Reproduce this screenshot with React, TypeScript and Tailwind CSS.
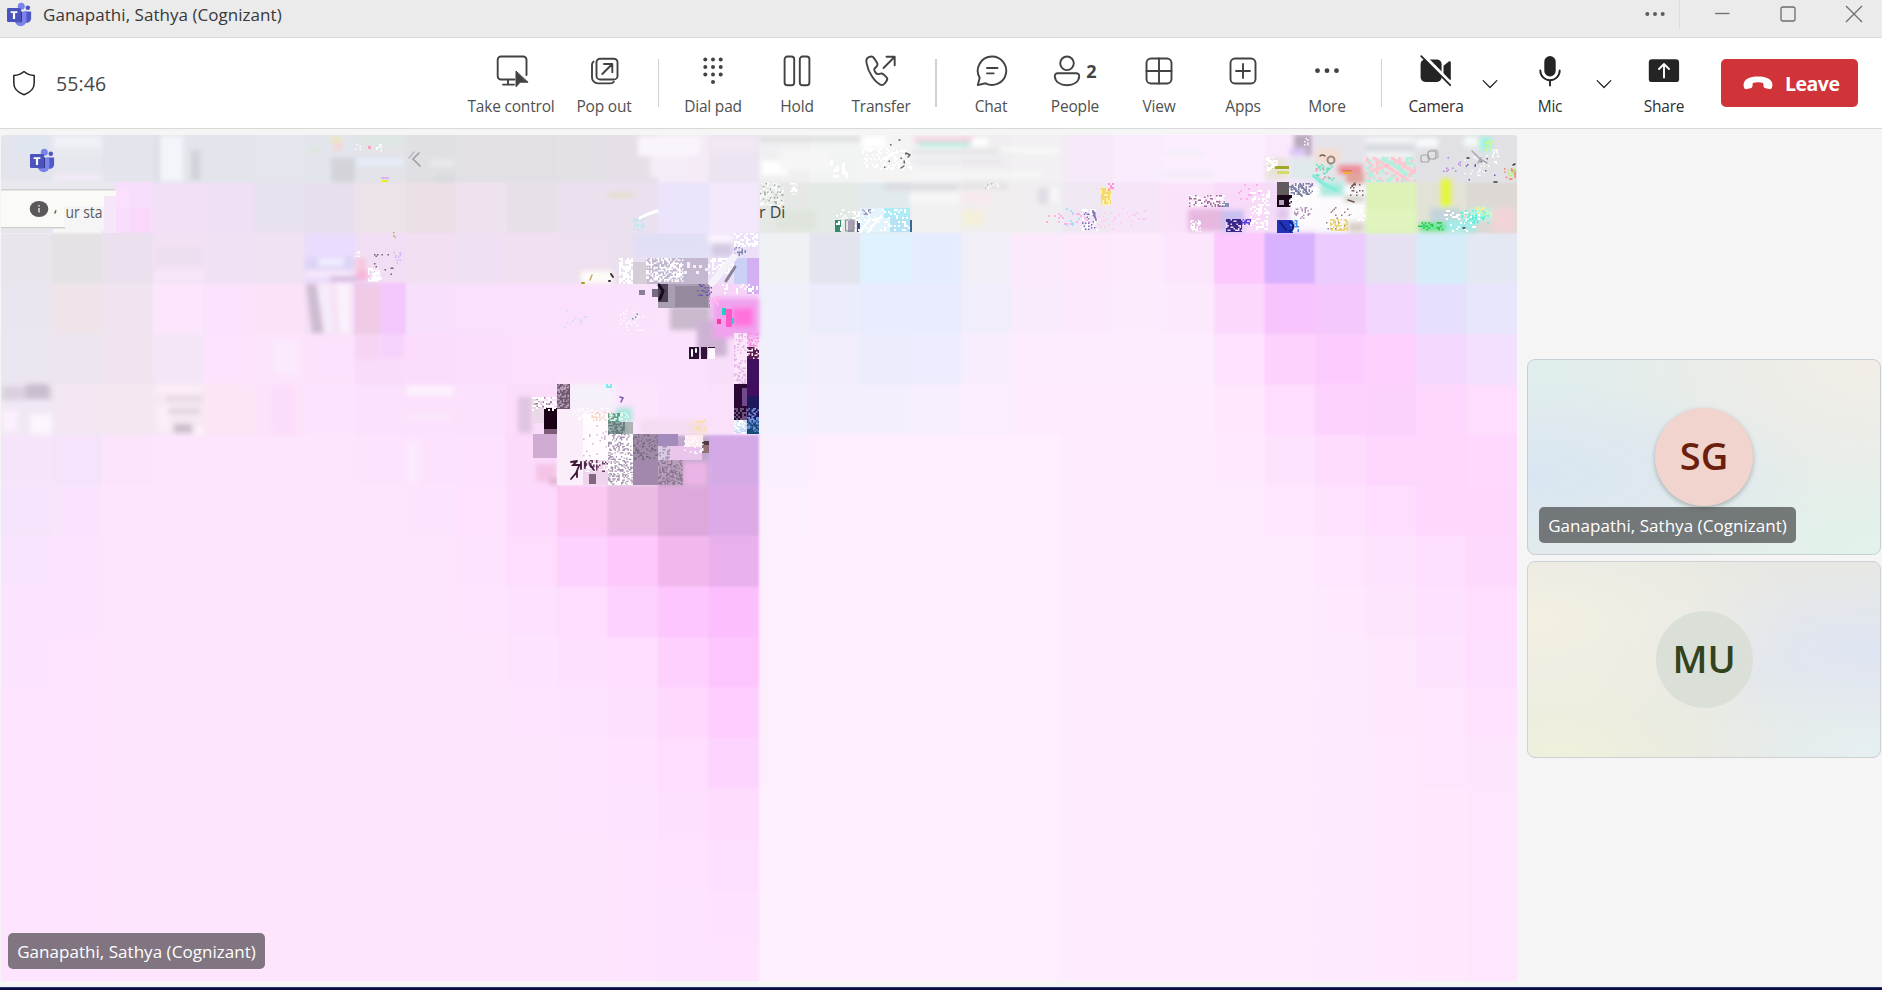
import React from "react";

const FONT = "font-['Segoe_UI','Open_Sans','Noto_Sans',sans-serif]";

/* ---------- shared video frame data ---------- */

const CELLS: string[] = [
  "e4e4ec e6e6ee e4e4ec e4e4ec e3e4ec e4e5ed e3e5ed e3e3e8 e0e0e4 e2e0e4 e2e0e5 e3e0e6 e6dfe8 f4ebf6 ede4f2 f0f0f2 f2f4f4 f4f4f4 f2f2f4 f0eef0 f2f0f2 f6eaf9 f9ecfd fceefe fceefe fae8fd e4e4ea e2e4e8 e1e1e5 e2e2e6",
  "f8f7f4 f8f8f4 f5dcfb f1e0f6 f0e0f5 e8e2ee e7e0ec ece2e9 eae0e6 efe2ef e8e0e8 ebe0ee ebe0ee ebe4fa f3e8fc e6e8e6 e4eae6 e2eaee f0f0f0 f0eeee f0eef0 efe8f3 f6e4f9 fbe2fb fadaf9 f4dcf9 f2f0f8 dcf2b6 e3e2d6 ddd8d4",
  "e8e6ec e4e2e4 ebe0ee f1e1f3 f1e1f5 f0e1f3 ecdcfa f2def4 f2dff2 f0e0f3 f0e0f0 eee0ee ebe0ee e5e2f5 ece0f8 f0f1f4 e2e4ee e0f2fe e6ecff f2eef8 fbe9fc fde8fc fdeafd fce6fe fcc8fd d8b2ff ecccfe e6e0f2 d6ecf8 e4e8f2",
  "eae6f0 efe4ea efe4f0 fbe6fd fce2fd fbe2f8 f5e0f5 f2c8f8 f8e0fd fae0fd fae0fd fae0fd fae2fd fbe2fd f6d4f8 eff0fa ebecfc e8ecfe e8ecfe f2edfb f9ebfc fce9fd fcebfd fde9fe fcd8fe f8c4fd f4c8fd f2d6fd e6e0fe e8e6fd",
  "ece6f0 ede6f0 efe4f0 f5e6f7 fde3fd fce4fd fce2fc f9dcfa fbdcfd fbddfd fcdffd fce1fd fce1fd fbe1fd f9def9 f0f0fb f2edfb ebedfd ecedfe f8edfc fdecfe fdecfe fdecfe fdecfe fee2fe fdd2fd fdccfe fdd0fe f5d8fd f2e0fe",
  "f0e8f4 f3e6f3 f3e6f0 f6e8f3 fce5f5 fde2fb fde4fe fce1fd fce1fd fce1fd fbdcfb fce8fc fbe4fc fbe1fd fbe0fb f3f1fc f5effd f5effd f8effe fbeefe feecfe feecfe feecfe feecfe fee8fe feddfe fdd3fe fbd2fc fed7fe feddfe",
  "f6e5fa f5e3fc fce4fd fde5fe fde5fe fde5fe fde5fe fde4fe fde2fe fde1fe fcdafc fce8fc e8dcee c0a8cc d4aae6 faf0fd feeefe feeefe feeefe feeefe feeefe feecfe feecfe feecfe fee9fe fee3fe fedcfe fdd7fe fdd6fe fed8fe",
  "f5e4fb fae4fd fde5fe fde5fe fde5fe fde5fe fde5fe fde5fe fde4fe fee2fe fdd9fd fcc8f4 eabbe4 dda8da dcaae6 fceffe feeefe feeefe feeefe feeefe feeefe feecfe feecfe feecfe feebfe fee6fe fee2fe feddfe fed7fe fdd7fe",
  "f9e4fe fde4fe fde5fe fde5fe fde5fe fde5fe fde5fe fde5fe fde5fe fee3fe feddfe fdd2fe fec8fa f2b8ee eab0ee feeffe feeefe feeefe feeefe feeefe feeefe feecfe feecfe feecfe feecfe feebfe fee7fe fee3fe fedefe fed9fe",
  "fce4fe fde4fe fee5fe fee5fe fee5fe fee5fe fee5fe fee5fe fee5fe fee4fe fee1fe feddfe fdd2fe fec6fe fcbefd feeffe feeefe feeefe feeefe feeefe feeefe feecfe feecfe feecfe feecfe feebfe fee9fe fee5fe fee1fe feddfe",
  "fde4fe fee4fe fee5fe fee5fe fee5fe fee5fe fee5fe fee5fe fee5fe fee5fe fee3fe fee0fe feddfe fdd0fe fdc4fe feeffe feeefe feeefe feeefe feeefe feeefe feecfe feecfe feecfe feecfe feebfe feeafe fee8fe fee3fe fedefe",
  "fee4fe fee4fe fee5fe fee5fe fee5fe fee5fe fee5fe fee5fe fee5fe fee5fe fee4fe fee3fe fee0fe fed8fe fdcdfe feeffe feeefe feeefe feeefe feeefe feeefe feecfe feecfe feecfe feecfe feebfe feeafe fee8fe fee6fe fee2fe",
  "fee4fe fee4fe fee5fe fee5fe fee5fe fee5fe fee5fe fee5fe fee5fe fee5fe fee5fe fee4fe fee2fe feddfe fdd4fe feeffe feeefe feeefe feeefe feeefe feeefe feecfe feecfe feecfe feecfe feebfe feeafe fee9fe fee7fe fee5fe",
  "fee4fe fee4fe fee5fe fee5fe fee5fe fee5fe fee5fe fee5fe fee5fe fee5fe fee5fe fee4fe fee3fe fee0fe fedcfe feeffe feeefe feeefe feeefe feeefe feeefe feecfe feecfe feecfe feecfe feebfe feeafe fee9fe fee8fe fee7fe",
  "fee4fe fee4fe fee5fe fee5fe fee5fe fee5fe fee5fe fee5fe fee5fe fee5fe fee5fe fee5fe fee4fe fee2fe fedefe feeffe feeefe feeefe feeefe feeefe feeefe feecfe feecfe feecfe feecfe feebfe feeafe fee9fe fee8fe fee7fe",
  "fee4fe fee4fe fee5fe fee5fe fee5fe fee5fe fee5fe fee5fe fee5fe fee5fe fee5fe fee5fe fee4fe fee3fe fee1fe feeffe feeefe feeefe feeefe feeefe feeefe feecfe feecfe feecfe feecfe feebfe feeafe fee9fe fee8fe fee7fe",
  "fee4fe fee4fe fee5fe fee5fe fee5fe fee5fe fee5fe fee5fe fee5fe fee5fe fee5fe fee5fe fee4fe fee3fe fee2fe feeffe feeefe feeefe feeefe feeefe feeefe feecfe feecfe feecfe feecfe feebfe feeafe fee9fe fee8fe fee7fe",
];

type Block = [number, number, number, number, string];

/* blocks with feathered edges */
const SOFT: Block[] = [
  [54, 136, 48, 12, "#f0f2f8"], [54, 150, 48, 8, "#e9e9f0"], [54, 174, 48, 7, "#f2eaf8"],
  [18, 136, 30, 20, "#e0e6f0"], [160, 136, 23, 45, "#f4f4fb"], [155, 136, 5, 46, "#dcdce4"],
  [191, 150, 9, 30, "#d2d2da"], [331, 158, 24, 24, "#d3d3d9"], [356, 137, 50, 7, "#dde8e2"],
  [356, 159, 48, 7, "#e6edfa"], [430, 160, 24, 6, "#ebebee"], [435, 175, 20, 6, "#d8d8dd"],
  [331, 136, 10, 6, "#ece8b8"], [333, 142, 9, 9, "#f4d6da"], [310, 146, 9, 7, "#dde6da"],
  [155, 246, 46, 20, "#eedff0"], [155, 270, 48, 12, "#f8e6fa"],
  [306, 236, 48, 20, "#eadcff"], [306, 257, 48, 12, "#dcd4f4"], [318, 258, 26, 8, "#f2ecff"],
  [306, 272, 46, 4, "#fbf0fd"], [330, 276, 34, 5, "#d4b8dc"], [356, 258, 10, 16, "#f6c8dc"], [357, 271, 11, 9, "#f8b4dc"],
  [356, 284, 24, 50, "#efcbe6"], [381, 284, 23, 50, "#f4c8fd"], [356, 334, 24, 26, "#f6d4f4"], [381, 334, 23, 24, "#f5d2fb"],
  [274, 340, 24, 34, "#fbeafd"], [2, 386, 50, 14, "#dad0df"], [26, 384, 22, 14, "#c8becf"], [2, 410, 16, 22, "#fbf0fd"], [30, 414, 22, 20, "#fcf6fe"],
  [155, 386, 48, 6, "#fdeef6"], [166, 396, 36, 6, "#e8dae6"], [158, 404, 12, 28, "#fbeef8"], [168, 408, 32, 6, "#e4d7e2"],
  [174, 424, 18, 9, "#cdbfcc"], [196, 426, 8, 8, "#fff2fc"], [272, 386, 22, 48, "#fcdcfb"],
  [407, 386, 46, 10, "#fcf2fd"], [407, 414, 44, 6, "#fae8fc"], [407, 440, 12, 44, "#fceafe"],
  [638, 136, 62, 20, "#faf4fc"], [650, 156, 40, 22, "#f4ecf7"], [708, 136, 50, 16, "#f1e8f4"],
  [608, 193, 25, 4, "#e3dfc4"], [633, 234, 74, 23, "#e1dff6"], [708, 234, 26, 8, "#fbf4fc"], [712, 244, 20, 12, "#d2c9e2"],
  [581, 271, 32, 12, "#fffdf8"], [760, 136, 100, 6, "#dfdfe0"], [762, 161, 26, 14, "#ffffff"], [780, 150, 50, 20, "#f6f6f6"],
  [862, 136, 24, 12, "#ffffff"], [914, 137, 64, 6, "#f9cfe0"], [918, 142, 52, 4, "#a8f0e0"], [972, 138, 16, 8, "#ffffff"],
  [912, 150, 110, 4, "#e2e2e4"], [912, 160, 90, 4, "#e8e6e8"], [1000, 148, 58, 5, "#fafafa"], [912, 172, 130, 6, "#f8f7f8"],
  [884, 184, 74, 6, "#dcdadf"], [960, 183, 48, 6, "#e4e2e6"], [910, 194, 50, 10, "#f8f6f8"], [776, 210, 40, 20, "#dfe5dc"],
  [962, 210, 22, 16, "#f4f0da"], [962, 192, 30, 12, "#f8eaee"], [1038, 188, 10, 16, "#e0dce6"], [1052, 188, 6, 14, "#fbf6ff"],
  [1164, 150, 40, 6, "#f4eef8"], [1164, 170, 50, 8, "#f2ebf8"], [1294, 134, 18, 22, "#b8aabc"], [1290, 148, 16, 8, "#dcc6f4"],
  [1266, 158, 22, 22, "#e8e4da"], [1290, 158, 40, 22, "#dfe8ea"], [1316, 149, 24, 14, "#f6ddd0"], [1338, 165, 24, 9, "#ee8a98"],
  [1346, 172, 18, 12, "#e0a49c"], [1366, 138, 48, 4, "#fbfbfc"], [1366, 146, 48, 4, "#d0d6da"], [1366, 153, 46, 4, "#f8fafb"],
  [1416, 138, 22, 9, "#f8fafc"], [1464, 137, 14, 9, "#f4fcfa"], [1480, 137, 12, 14, "#9ff4e0"],
  [1188, 209, 34, 22, "#e6b8e0"], [1222, 210, 22, 22, "#c8c0f0"], [1277, 208, 12, 12, "#e0c8ec"],
  [1290, 186, 74, 44, "#fdfafd"], [1320, 182, 24, 14, "#a8eade"], [1344, 196, 20, 6, "#cfcfc4"], [1348, 222, 16, 10, "#d8cfc2"],
  [1441, 179, 10, 28, "#e4f838"], [1366, 208, 50, 24, "#e0f4be"], [1430, 208, 30, 22, "#c4d4dc"],
  [1420, 223, 30, 8, "#54e890"], [1446, 220, 30, 12, "#a0ece8"], [1470, 208, 30, 12, "#b8f6e4"], [1492, 208, 24, 24, "#f2d4d8"],
  [670, 306, 40, 24, "#cabace"], [697, 320, 30, 36, "#cdb2d4"], [713, 298, 46, 40, "#f0a2ee"], [733, 308, 20, 18, "#ff72dc"],
  [518, 397, 14, 36, "#dfc5df"], [570, 384, 46, 26, "#f6f0fb"], [616, 408, 16, 14, "#a8e6dc"], [640, 420, 60, 14, "#f4dcf2"],
  [536, 464, 20, 18, "#f4c4e6"], [550, 478, 8, 7, "#dcb0d0"], [690, 420, 16, 16, "#f6dede"], [683, 462, 25, 24, "#ecb4e6"],
];

/* blocks with crisp edges */
const HARD: Block[] = [
  [658, 185, 50, 48, "#ebe4fa"], [734, 258, 13, 26, "#ccd0f6"], [747, 258, 12, 36, "#d2b0f2"],
  [646, 258, 62, 26, "#c3b8cf"], [633, 262, 14, 22, "#d5ced9"], [639, 290, 6, 5, "#8a7c92"],
  [658, 284, 52, 24, "#aa9fb2"], [658, 284, 10, 18, "#4d4258"], [652, 289, 6, 8, "#756a80"], [675, 286, 33, 21, "#958a9e"],
  [722, 308, 4, 7, "#20cfc0"], [717, 319, 4, 5, "#f23c98"], [726, 309, 6, 18, "#ff58c8"], [732, 318, 2, 6, "#38c8d8"],
  [689, 347, 10, 12, "#2c1034"], [701, 347, 6, 12, "#32143c"], [708, 347, 7, 1, "#2c1034"], [708, 348, 7, 11, "#fff8ff"],
  [734, 333, 13, 51, "#fbe6fc"], [747, 347, 12, 12, "#5b1c54"], [747, 359, 12, 51, "#40105f"], [734, 384, 13, 24, "#2b0735"],
  [734, 408, 13, 12, "#6b4d80"], [734, 420, 13, 13, "#c8dcf2"], [747, 396, 12, 38, "#1f185c"], [742, 388, 5, 18, "#704a8c"],
  [747, 420, 12, 14, "#1a4a78"], [557, 384, 13, 25, "#6f586e"], [532, 397, 12, 26, "#ead8e9"], [544, 408, 13, 21, "#190016"],
  [544, 429, 13, 5, "#7c5c78"], [533, 434, 24, 24, "#d0acd4"], [557, 410, 26, 75, "#faeefb"], [583, 414, 25, 46, "#fffbff"],
  [583, 460, 25, 25, "#efd4ee"], [608, 413, 12, 9, "#5c9c8c"], [608, 422, 25, 12, "#687c80"], [625, 422, 8, 12, "#aeb4b4"],
  [608, 434, 25, 51, "#ffffff"], [633, 434, 25, 26, "#a08ca8"], [633, 460, 25, 25, "#a188ac"], [658, 434, 20, 12, "#a38bbc"],
  [658, 446, 12, 14, "#d8cae2"], [670, 446, 32, 14, "#eac6ec"], [685, 435, 18, 12, "#fdebf2"], [702, 441, 7, 12, "#927076"],
  [702, 441, 7, 4, "#503c44"], [658, 460, 25, 25, "#b8a0bc"], [589, 474, 7, 10, "#846680"],
  [1269, 166, 20, 3, "#a4a828"], [1277, 171, 12, 3, "#d4dc68"], [1277, 182, 12, 13, "#615b5e"], [1277, 195, 15, 12, "#180616"],
  [1279, 200, 5, 5, "#b9a0bc"], [1277, 220, 16, 13, "#2333b8"], [1226, 219, 16, 13, "#382887"], [1242, 219, 9, 6, "#5b43d8"],
  [1219, 203, 10, 4, "#8290bc"], [1342, 170, 10, 1.5, "#e08040"], [1344, 172.5, 8, 1.5, "#f0b020"],
  [835, 220, 6, 12, "#38886c"], [848, 220, 6, 12, "#a8a0b0"], [857, 220, 3, 12, "#4c4880"], [909, 220, 3, 12, "#3c6890"],
  [860, 208, 50, 24, "#e4f4fa"], [884, 208, 26, 10, "#b0ecf8"], [890, 218, 20, 14, "#b6e2f6"], [1101, 188, 10, 16, "#f6d870"],
  [382, 180, 6, 2, "#e4f410"], [381, 177, 8, 2, "#d9b4fb"],
];

/* grain: x, y, w, h, pixel, density, colour */
type Grain = [number, number, number, number, number, number, string];
const GRAIN: Grain[] = [
  [619, 258, 14, 26, 2, 0.75, "#ffffff"], [646, 258, 38, 24, 1.5, 0.55, "#ffffff"], [684, 262, 26, 18, 3, 0.25, "#f4f0fa"],
  [708, 258, 26, 16, 2, 0.6, "#ffffff"], [633, 218, 12, 14, 1.5, 0.45, "#bde8f2"], [734, 233, 25, 14, 2, 0.5, "#ffffff"],
  [734, 247, 12, 10, 1.5, 0.4, "#7b88b4"], [722, 284, 36, 10, 2, 0.4, "#ffffff"], [697, 284, 16, 12, 1.5, 0.3, "#6a5aa8"],
  [709, 296, 12, 10, 2, 0.45, "#ffb4f4"], [620, 310, 24, 22, 1.5, 0.14, "#ffffff"], [632, 312, 12, 14, 1.5, 0.06, "#50a0a8"],
  [563, 310, 24, 18, 1.5, 0.06, "#c8dcf4"], [734, 333, 13, 51, 1.5, 0.3, "#e4b4e8"], [747, 333, 12, 14, 1.5, 0.4, "#f490dc"],
  [747, 347, 12, 12, 1.5, 0.4, "#fff0fa"], [734, 408, 13, 12, 2, 0.4, "#21082c"], [747, 408, 12, 24, 1.5, 0.3, "#6f90d8"],
  [734, 420, 13, 14, 1.5, 0.4, "#ffffff"], [557, 384, 13, 25, 1.5, 0.45, "#b39cb4"], [532, 397, 22, 11, 1.5, 0.3, "#9c7c96"],
  [532, 397, 24, 14, 2, 0.55, "#ffffff"], [572, 408, 40, 12, 1.5, 0.3, "#ffffff"], [590, 412, 26, 9, 1.5, 0.3, "#f4d4c0"],
  [606, 384, 8, 5, 2, 0.4, "#7cecec"], [608, 412, 22, 10, 1.5, 0.3, "#e0fff4"], [608, 422, 20, 12, 1.5, 0.35, "#9cb0b0"],
  [583, 425, 25, 35, 1.5, 0.05, "#d8b4d8"], [608, 434, 25, 51, 1.3, 0.33, "#a894b0"], [633, 434, 25, 26, 1.3, 0.25, "#76647e"],
  [658, 460, 25, 25, 1.3, 0.38, "#8c7492"], [584, 460, 24, 12, 1.5, 0.5, "#ffffff"], [584, 460, 24, 12, 1.5, 0.22, "#684064"],
  [658, 446, 12, 14, 1.5, 0.3, "#a890b8"], [684, 436, 20, 18, 1.5, 0.25, "#ffffff"], [696, 415, 10, 16, 2, 0.2, "#fce0a0"],
  [760, 183, 25, 24, 1.4, 0.4, "#ffffff"], [760, 183, 25, 22, 1.4, 0.12, "#98a098"], [790, 183, 8, 12, 1.5, 0.4, "#ffffff"],
  [752, 234, 7, 16, 2, 0.35, "#ffffff"], [862, 148, 50, 22, 2, 0.3, "#ffffff"], [884, 144, 26, 26, 1.5, 0.025, "#606060"],
  [830, 160, 20, 20, 3, 0.3, "#ffffff"], [836, 209, 74, 23, 2, 0.25, "#ffffff"], [985, 183, 16, 6, 1.5, 0.25, "#c0c084"],
  [862, 209, 10, 6, 1.5, 0.35, "#9c98c0"], [985, 183, 16, 7, 1.5, 0.3, "#ffffff"], [1040, 213, 50, 12, 2, 0.16, "#ffb0e8"],
  [1066, 208, 14, 18, 2, 0.22, "#a4e4f8"], [1082, 209, 16, 22, 2, 0.5, "#ffffff"], [1082, 209, 14, 22, 1.5, 0.12, "#8068c0"],
  [1100, 186, 12, 20, 2, 0.35, "#fff2a8"], [1108, 183, 6, 8, 2, 0.25, "#ff90e0"], [1098, 208, 40, 22, 2, 0.12, "#ffd0f8"],
  [1134, 208, 20, 12, 2, 0.16, "#fcccf6"], [1189, 195, 36, 12, 1.5, 0.5, "#ffffff"], [1189, 195, 36, 12, 1.5, 0.2, "#9c6c94"],
  [1189, 220, 12, 12, 1.5, 0.5, "#ffffff"], [1226, 219, 24, 13, 1.5, 0.38, "#f4d8ff"], [1238, 184, 24, 16, 2, 0.14, "#ffb0ec"],
  [1250, 190, 20, 40, 2, 0.35, "#ffffff"], [1264, 157, 14, 12, 1.5, 0.35, "#ffffff"], [1289, 183, 30, 24, 1.5, 0.35, "#ffffff"],
  [1289, 183, 24, 12, 1.5, 0.35, "#8085a8"], [1294, 207, 18, 12, 1.5, 0.3, "#b094b8"], [1326, 207, 26, 24, 1.5, 0.08, "#987f70"],
  [1330, 219, 18, 13, 1.5, 0.45, "#ead470"], [1350, 184, 14, 12, 1.5, 0.14, "#706058"], [1290, 220, 10, 12, 1.5, 0.4, "#4a90e8"],
  [1316, 164, 22, 18, 1.7, 0.25, "#70e0c0"], [1314, 168, 18, 12, 1.7, 0.2, "#ec9ca8"], [1350, 205, 16, 16, 2, 0.3, "#ffffff"],
  [1366, 157, 50, 25, 2.5, 0.22, "#ffc4cc"], [1366, 157, 50, 25, 2.5, 0.22, "#b4f0dc"], [1440, 157, 24, 16, 1.5, 0.05, "#b080e0"],
  [1464, 155, 34, 22, 1.5, 0.1, "#ffffff"], [1464, 155, 34, 26, 1.5, 0.02, "#7858a8"], [1492, 148, 8, 12, 1.5, 0.35, "#ffffff"],
  [1504, 168, 12, 13, 1.7, 0.3, "#a8f868"], [1504, 168, 12, 13, 1.7, 0.18, "#f88c80"], [1418, 222, 26, 10, 1.7, 0.3, "#2cc848"],
  [1444, 210, 36, 22, 2, 0.16, "#ffffff"], [1460, 210, 30, 14, 1.7, 0.25, "#5cf0d8"], [1476, 207, 16, 10, 1.7, 0.25, "#f8f090"],
  [1486, 139, 8, 12, 1.7, 0.3, "#e8f86c"], [1304, 138, 5, 8, 1.5, 0.4, "#ffffff"],
  [368, 254, 28, 22, 1.5, 0.05, "#706070"], [368, 268, 14, 15, 1.7, 0.6, "#ffffff"], [354, 251, 6, 8, 1.5, 0.4, "#ffffff"],
  [392, 252, 10, 12, 1.5, 0.25, "#d4b4fc"], [393, 232, 6, 7, 1.5, 0.3, "#b8b060"], [355, 144, 7, 8, 1.5, 0.45, "#ffffff"],
  [376, 144, 6, 8, 1.5, 0.45, "#ffffff"], [368, 146, 3, 3, 1.5, 0.8, "#f8a0c4"],
];

function grainPath([x, y, w, h, p, density]: Grain, seed: number): string {
  let s = seed * 7919 + 17;
  const next = () => {
    s = (s * 1103515245 + 12345) % 2147483648;
    return s / 2147483648;
  };
  let d = "";
  for (let j = 0; j + p <= h + 0.01; j += p) {
    for (let i = 0; i + p <= w + 0.01; i += p) {
      if (next() < density) {
        d += `M${(x + i).toFixed(1)} ${(y + j).toFixed(1)}h${p}v${p}h-${p}z`;
      }
    }
  }
  return d;
}

const COL = 50.54;
const rowTop = (r: number) => (r === 0 ? 135 : 132 + 50.5 * r);

function SharedVideo() {
  return (
    <svg viewBox="1 135 1516 846" preserveAspectRatio="none" className="block h-full w-full">
      <defs>
        <filter id="edge" x="-2%" y="-2%" width="104%" height="104%">
          <feGaussianBlur stdDeviation="0.8" />
        </filter>
        <filter id="soft" x="-5%" y="-5%" width="110%" height="110%">
          <feGaussianBlur stdDeviation="2.6" />
        </filter>
        <filter id="grain" x="-2%" y="-2%" width="104%" height="104%">
          <feGaussianBlur stdDeviation="0.4" />
        </filter>
      </defs>
      <rect x="1" y="135" width="1516" height="846" fill="#fee6fe" />
      <g filter="url(#edge)">
        {CELLS.map((row, r) =>
          row.split(" ").map((c, i) => (
            <rect
              key={`${r}-${i}`}
              x={i === 0 ? -5 : 1 + i * COL}
              y={r === 0 ? 128 : rowTop(r)}
              width={i === 0 ? COL + 7 : i === 29 ? COL + 8 : COL + 0.6}
              height={r === 0 ? 55 : 52}
              fill={`#${c}`}
            />
          )),
        )}
      </g>
      <g filter="url(#soft)">
        {SOFT.map(([x, y, w, h, c], i) => (
          <rect key={i} x={x} y={y} width={w} height={h} fill={c} />
        ))}
        {/* slanted highlights in the dark tile */}
        <path d="M306 284h10l8 49h-12z" fill="#cdbbd2" />
        <path d="M318 284h12l4 49h-10z" fill="#f6ecf8" />
        <path d="M336 284h14v49h-10z" fill="#fbf2fd" />
      </g>
      {/* notification strip */}
      <rect x="1" y="190" width="115" height="37" fill="#fafaf6" />
      <rect x="1" y="182" width="115" height="7" fill="#e8e8ee" />
      <rect x="1" y="189" width="114" height="1.5" fill="#cfcfd4" />
      <rect x="64" y="206" width="42" height="25" fill="#f6f5f6" />
      <rect x="1" y="227" width="64" height="1.5" fill="#cfcdd2" />
      <rect x="1" y="229" width="52" height="4" fill="#e8e6ec" />
      <rect x="104" y="196" width="14" height="37" fill="#f6e6fa" />
      <rect x="116" y="182.5" width="36" height="50" fill="#f6defc" />
      <rect x="116" y="188" width="14" height="20" fill="#fbe0fd" />
      <rect x="129" y="208" width="22" height="24" fill="#fad8fb" />
      <g>
        {HARD.map(([x, y, w, h, c], i) => (
          <rect key={i} x={x} y={y} width={w} height={h} fill={c} />
        ))}
      </g>
      <g filter="url(#grain)">
        {GRAIN.map((g, i) => (
          <path key={i} d={grainPath(g, i + 1)} fill={g[6]} />
        ))}
      </g>
      {/* strokes and fragments */}
      <g fill="none" strokeLinecap="round" filter="url(#grain)">
        <path d="M414 152l-5 6" stroke="#bcbcc0" strokeWidth="1.500" />
        <path d="M419 153l-6 6l7 7" stroke="#a0a0a6" strokeWidth="1.700" />
        <path d="M640 218l8-4l9-3" stroke="#fff" strokeWidth="3" />
        <path d="M712 283l22-26" stroke="#f6f2fa" strokeWidth="7" />
        <path d="M726 281l9-14" stroke="#8c8098" strokeWidth="3" />
        <path d="M659 285l4 6l-3 8" stroke="#120a1c" strokeWidth="3" />
        <path d="M692 350v6M696 349v3" stroke="#fff" strokeWidth="2" />
        <path d="M582 283h2" stroke="#a4a020" strokeWidth="2" />
        <path d="M592 275l-2 5" stroke="#c0ac68" strokeWidth="1.500" />
        <path d="M611 274l2 3M609 281h1" stroke="#403030" strokeWidth="2" />
        <path d="M571 462l6-1M577 461l-4 4h8M581 462v7M579 466l-3 7l-5 6M577 471v6M585 462v5M590 465l4 5" stroke="#3d1838" strokeWidth="1.800" />
        <path d="M620 397l3 1l-2 4" stroke="#8058b0" strokeWidth="1.500" />
        <path d="M906 153l4 2l-2 2M901 168l3-2M899 140h1" stroke="#66666a" strokeWidth="1.500" />
        <path d="M1093 211l3 9" stroke="#8a76b8" strokeWidth="2" />
        <path d="M846 220h8v11h-8z" stroke="#80809c" strokeWidth="1" />
        <path d="M860 232l10-13M868 232l10-13" stroke="#fff" strokeWidth="2.500" />
        <path d="M1268 160l7 5M1268 170l5-4" stroke="#fff" strokeWidth="3" />
        <path d="M1320 156a4 4 0 0 1 5 0" stroke="#645c5c" strokeWidth="1.500" />
        <circle cx="1331" cy="160" r="3.500" stroke="#9a8a82" strokeWidth="2" />
        <rect x="1421" y="155" width="8" height="7" rx="2" stroke="#aaaaae" strokeWidth="1.200" />
        <rect x="1428" y="151" width="8" height="8" rx="2" stroke="#9c9ca0" strokeWidth="1.200" />
        <path d="M1431 150h5a3 3 0 0 1 2 3v5" stroke="#b4b4b8" strokeWidth="1.200" />
        <path d="M1472 151l8 8M1480 159l7 4M1478 163l3-5" stroke="#a8a8ae" strokeWidth="1.500" />
        <path d="M1374 158l34 22M1392 158l22 14M1372 171l16-6" stroke="#ffc8d0" strokeWidth="3" />
        <path d="M1383 158l24 16" stroke="#b0f0dc" strokeWidth="3" />
        <path d="M1314 176l10 8l12 6" stroke="#8cecdc" strokeWidth="4" />
        <path d="M1292 186l10 10M1300 184l8 10" stroke="#7a7f9c" strokeWidth="2" />
        <path d="M1352 186l3-3M1348 200l6 2" stroke="#6c5850" strokeWidth="1.500" />
        <path d="M1280 222l6 8M1290 222a6 5 0 0 1 0 9" stroke="#101c80" strokeWidth="2" />
        <path d="M1494 182h3M1513 165l2-1M1467 158h2M1463 228h2" stroke="#40383c" strokeWidth="1.500" />
      </g>
      <ellipse cx="39" cy="209" rx="9.300" ry="8" fill="#5c585a" />
      <rect x="38.200" y="208" width="1.600" height="4.500" fill="#d8d4d4" />
      <rect x="38.200" y="205" width="1.600" height="1.600" fill="#d8d4d4" />
      <text x="54" y="220" fontSize="15" fill="#4a4a4c" fontFamily="Open Sans">‘</text>
      <text x="65.500" y="218" fontSize="16" fill="#5c5a5e" fontFamily="Open Sans" textLength="37" lengthAdjust="spacingAndGlyphs">ur sta</text>
      <text x="759" y="218" fontSize="16" fill="#404442" fontFamily="Open Sans">r Di</text>
      <svg x="29" y="148" width="26" height="26" viewBox="0 0 26 26">
        <TeamsShapes />
      </svg>
    </svg>
  );
}

/* ---------- icons ---------- */

function TeamsShapes() {
  return (
    <>
      <circle cx="21.800" cy="5.800" r="2.300" fill="#4f56c4" />
      <circle cx="15.300" cy="4.300" r="3.500" fill="#7a84ec" />
      <path d="M18 9.500h6.300c.5 0 .8.400.8.800v6.500a4 4 0 0 1-7.100 2.400z" fill="#5058c8" />
      <path d="M9 9.500h10.500c.5 0 .9.400.9.900v8.100a5.700 5.700 0 0 1-11.400 0z" fill="#7b83eb" />
      <path d="M9 9.500h7v9.700a1 1 0 0 1-1 1H9.200A5 5 0 0 1 9 18.500z" fill="#343a90" />
      <rect x="1" y="6" width="14" height="14" rx="1.300" fill="#4b53bc" />
      <path d="M4.600 9.200h6.800v1.900H9.100v6H6.900v-6H4.600z" fill="#fff" />
    </>
  );
}

type IconProps = { children: React.ReactNode };
function Icon({ children }: IconProps) {
  return (
    <svg width="36" height="36" viewBox="0 0 36 36" fill="none" stroke="currentColor" strokeWidth="1.900" strokeLinecap="round" strokeLinejoin="round" className="shrink-0">
      {children}
    </svg>
  );
}

const TakeControlIcon = () => (
  <Icon>
    <path d="M21.500 26.500H8a3.300 3.300 0 0 1-3.300-3.300V6.800A3.300 3.300 0 0 1 8 3.500h22.200a3.300 3.300 0 0 1 3.300 3.300V22M15 26.500v5M10 31.600h11" />
    <path d="M23 18.500v15.300l4.200-4.600h7.500z" fill="currentColor" strokeWidth="1" />
  </Icon>
);
const PopOutIcon = () => (
  <Icon>
    <rect x="10.500" y="5.700" width="21" height="20.800" rx="3.600" />
    <path d="M7.600 8.500C6.500 9.300 6 10.300 6 11.800v12.600a6 6 0 0 0 6 6h12.500c1.500 0 2.600-.6 3.300-1.600M16.300 21l10-10M18 11h8.300v8.300" />
  </Icon>
);
const DialPadIcon = () => (
  <Icon>
    <g fill="currentColor" stroke="none">
      {[6.500, 14, 21.500].map((y) => [10.300, 18, 25.700].map((x) => <circle key={`${x}${y}`} cx={x} cy={y} r="2" />))}
      <circle cx="18" cy="29" r="2" />
    </g>
  </Icon>
);
const HoldIcon = () => (
  <Icon>
    <rect x="5.600" y="3.500" width="9.600" height="28.800" rx="2.800" />
    <rect x="20.800" y="3.500" width="9.600" height="28.800" rx="2.800" />
  </Icon>
);
const TransferIcon = () => (
  <Icon>
    <path d="M5.800 4.200c2-.9 4.200-.6 5.200.9l2.900 4.500c.8 1.300.6 2.900-.3 3.900l-2 2c-.6.600-.5 1.400 0 2.400l1.200 2c.6.900 1.300 1.400 2.200 1.200l2.600-.5c1.200-.2 2.100.1 3 .9l2.600 2.400c1.200 1.100 1.300 2.700.4 4l-1.700 2.400c-1 1.500-2.900 2-4.600 1.300C12 29.200 5.200 19.800 3.500 9.900 3 7.300 3.700 5.100 5.800 4.200z" />
    <path d="M20.500 15L31.500 4M23.500 3.800h8.200v8.400" />
  </Icon>
);
const ChatIcon = () => (
  <Icon>
    <path d="M18.800 3.500a14.200 14.200 0 1 1-6.300 26.800l-7.700 1.800 1.900-7.300A14.200 14.200 0 0 1 18.800 3.500zM14 15h10.500M14 20.400h6.700" />
  </Icon>
);
const PersonIcon = () => (
  <Icon>
    <circle cx="18" cy="10.300" r="6.800" />
    <path d="M8.800 20.300h18.400c2 0 3.200 1.200 3 3-.5 5.600-5.400 8.900-12.200 8.900S6.300 28.900 5.800 23.300c-.2-1.800 1-3 3-3z" />
  </Icon>
);
const ViewIcon = () => (
  <Icon>
    <rect x="5.500" y="5.500" width="25" height="25" rx="4.500" />
    <path d="M18 5.500v25M5.500 18h25" />
  </Icon>
);
const AppsIcon = () => (
  <Icon>
    <rect x="5.500" y="5.500" width="25" height="25" rx="4.500" />
    <path d="M18 11v14M11 18h14" />
  </Icon>
);
const MoreIcon = () => (
  <Icon>
    <g fill="currentColor" stroke="none">
      <circle cx="8.500" cy="17.700" r="2.400" />
      <circle cx="18" cy="17.700" r="2.400" />
      <circle cx="27.500" cy="17.700" r="2.400" />
    </g>
  </Icon>
);
const CameraOffIcon = () => (
  <Icon>
    <rect x="2.600" y="6.400" width="21" height="22.600" rx="4.800" fill="currentColor" stroke="none" />
    <path d="M25.500 12.800l5.300-4.200c.9-.7 2-.2 2 .9v16.400c0 1.100-1.100 1.600-2 .9l-5.300-4.200z" fill="currentColor" stroke="none" />
    <path d="M5 2l29 29.500" stroke="#fff" strokeWidth="3.500" />
    <path d="M3.200 3.200L32.200 32.200" strokeWidth="1.800" />
  </Icon>
);
const MicIcon = () => (
  <Icon>
    <rect x="12.300" y="3" width="11.400" height="20.500" rx="5.700" fill="currentColor" stroke="none" />
    <path d="M8.300 17.500a9.700 9.700 0 0 0 19.400 0M18 27.500v5" />
  </Icon>
);
const ShareIcon = () => (
  <Icon>
    <rect x="2.800" y="6.300" width="30.300" height="22.800" rx="3.200" fill="currentColor" stroke="none" />
    <path d="M18 24.500V11.300M13 16l5-5 5 5" stroke="#fff" strokeWidth="1.900" />
  </Icon>
);

function Chevron() {
  return (
    <svg width="24" height="24" viewBox="0 0 24 24" fill="none" stroke="#242424" strokeWidth="1.300" strokeLinecap="round" strokeLinejoin="round" className="mt-[34px] shrink-0">
      <path d="M5.200 8.600l6.800 6.900 6.800-6.900" />
    </svg>
  );
}

/* ---------- toolbar ---------- */

type ToolProps = { label: string; children: React.ReactNode; wide?: boolean; dark?: boolean; count?: string };
function Tool({ label, children, wide, dark, count }: ToolProps) {
  return (
    <button className={`flex h-full shrink-0 flex-col items-center pt-[15px] ${wide ? "w-[102px]" : "w-[84px]"} ${dark ? "text-[#242424]" : "text-[#424242]"}`}>
      <span className="flex h-9 items-center justify-center">
        {children}
        {count && <span className="ml-px pr-1 text-[18px] leading-9 font-bold">{count}</span>}
      </span>
      <span className={`mt-1.5 text-[15.5px] leading-[22px] tracking-[-0.2px] whitespace-nowrap ${dark ? "text-[#303030]" : "text-[#505050]"}`}>{label}</span>
    </button>
  );
}

function Divider({ narrow }: { narrow?: boolean }) {
  return (
    <div className={`flex h-full shrink-0 justify-center pt-[21px] ${narrow ? "w-[25px]" : "w-[26px]"}`}>
      <div className="h-12 w-[1.5px] bg-[#d1d1d1]" />
    </div>
  );
}

function NameTag({ className }: { className: string }) {
  return (
    <div className={`absolute flex h-9 w-[257px] items-center justify-center rounded-[5px] bg-[#1a1a1a]/55 pt-0.5 text-[17px] tracking-[0.04px] whitespace-nowrap text-white ${className}`}>
      Ganapathi, Sathya (Cognizant)
    </div>
  );
}

export default function App() {
  return (
    <div className={`flex h-[990px] w-[1882px] flex-col overflow-hidden bg-[#f5f5f5] ${FONT}`}>
      <header className="flex h-[38px] shrink-0 items-start border-b border-[#d6d6d6] bg-[#ebebeb]">
        <svg width="26" height="26" viewBox="0 0 26 26" className="mt-0.5 ml-1.5 shrink-0">
          <TeamsShapes />
        </svg>
        <span className="ml-[11px] text-[17px] leading-[30px] tracking-[0.04px] whitespace-nowrap text-[#383838]">Ganapathi, Sathya (Cognizant)</span>
        <div className="ml-auto flex">
          <svg width="250" height="30" viewBox="1632 0 250 30" fill="none" stroke="#6e6e6e" strokeWidth="1.300">
            <g fill="#5c5c5c" stroke="none">
              <circle cx="1647.300" cy="14" r="2" />
              <circle cx="1655" cy="14" r="2" />
              <circle cx="1662.700" cy="14" r="2" />
            </g>
            <path d="M1679.500 0v29" stroke="#dcdcdc" strokeWidth="1" />
            <path d="M1715 13.500h14.500" />
            <rect x="1781" y="7" width="14" height="14" rx="2" />
            <path d="M1846 6l16 16M1862 6l-16 16" />
          </svg>
        </div>
      </header>

      <nav className="flex h-[91px] shrink-0 items-start border-b border-[#d9d9d9] bg-white pr-6">
        <svg width="24" height="26" viewBox="0 0 24 26" fill="none" stroke="#242424" strokeWidth="1.500" strokeLinejoin="round" className="mt-8 ml-3 shrink-0">
          <path d="M12 1.500c2.800 2.400 6 3.700 10.200 4V13c0 5.800-3.700 9.400-10.200 11.700C5.500 22.400 1.800 18.800 1.800 13V5.500c4.200-.3 7.400-1.600 10.200-4z" />
        </svg>
        <span className="mt-[31px] ml-5 text-[19.5px] leading-[30px] tracking-[0.1px] text-[#484848]">55:46</span>
        <div className="ml-auto flex h-full">
          <Tool label="Take control" wide><TakeControlIcon /></Tool>
          <Tool label="Pop out"><PopOutIcon /></Tool>
          <Divider narrow />
          <Tool label="Dial pad"><DialPadIcon /></Tool>
          <Tool label="Hold"><HoldIcon /></Tool>
          <Tool label="Transfer"><TransferIcon /></Tool>
          <Divider />
          <Tool label="Chat"><ChatIcon /></Tool>
          <Tool label="People" count="2"><PersonIcon /></Tool>
          <Tool label="View"><ViewIcon /></Tool>
          <Tool label="Apps"><AppsIcon /></Tool>
          <Tool label="More"><MoreIcon /></Tool>
          <Divider narrow />
          <Tool label="Camera" dark><CameraOffIcon /></Tool>
          <Chevron />
          <div className="ml-1.5 flex"><Tool label="Mic" dark><MicIcon /></Tool></div>
          <Chevron />
          <div className="ml-1.5 flex"><Tool label="Share" dark><ShareIcon /></Tool></div>
          <button className="mt-[21px] ml-[15px] flex h-12 w-[137px] shrink-0 items-center rounded-[5px] bg-[#d13438] pl-[22px] text-white">
            <svg width="30" height="16" viewBox="0 0 30 16" fill="currentColor" className="shrink-0">
              <path d="M15 1.500c6.500 0 11.500 1.800 13.500 5 1.200 2 1.100 4 .5 6-.4 1.300-1.500 1.900-2.900 1.600l-3.500-.8c-1.300-.3-2-1.100-2.100-2.300l-.3-2.900c-3-1.100-7.400-1.100-10.400 0L9.500 11c-.1 1.200-.8 2-2.100 2.300l-3.500.8c-1.400.3-2.500-.3-2.900-1.600-.6-2-.7-4 .5-6 2-3.200 7-5 13.500-5z" />
            </svg>
            <span className="ml-3 pt-0.5 text-[19.5px] font-bold tracking-[-0.5px]">Leave</span>
          </button>
        </div>
      </nav>

      <main className="flex h-[858px] shrink-0 pt-1.5 pb-1.5">
        <section className="relative ml-px h-[846px] w-[1516px] shrink-0 overflow-hidden rounded-t-[4px]">
          <SharedVideo />
          <NameTag className="bottom-3 left-[7px]" />
        </section>
        <aside className="flex flex-1 flex-col justify-center gap-1.5 pr-px pl-2.5">
          <div className="relative flex h-[196px] items-center justify-center rounded-lg border border-[#c8cfd4] bg-[#e4ebea] bg-[radial-gradient(ellipse_at_0%_60%,#d9e6f2_0%,transparent_60%),radial-gradient(ellipse_at_100%_0%,#f2eee6_0%,transparent_60%),radial-gradient(ellipse_at_100%_100%,#e2f2ea_0%,transparent_50%),radial-gradient(ellipse_at_0%_0%,#e0efee_0%,transparent_40%)]">
            <div className="flex size-[98px] items-center justify-center rounded-full bg-[#f1d4cd] pb-0.5 text-[38px] font-semibold text-[#6b1f0c] shadow-[0_2px_5px_rgba(0,0,0,0.25)]">SG</div>
            <NameTag className="bottom-[11px] left-[11px]" />
          </div>
          <div className="flex h-[197px] items-center justify-center rounded-lg border border-[#cdd1d1] bg-[#e7e8e4] bg-[radial-gradient(ellipse_at_0%_30%,#f4f0e2_0%,transparent_55%),radial-gradient(ellipse_at_10%_100%,#eff0dc_0%,transparent_50%),radial-gradient(ellipse_at_100%_45%,#dfe5f3_0%,transparent_55%),radial-gradient(ellipse_at_100%_100%,#e5eff2_0%,transparent_45%)]">
            <div className="flex size-[97px] items-center justify-center rounded-full bg-[#dae0d7] pb-0.5 text-[38px] font-semibold text-[#324320]">MU</div>
          </div>
        </aside>
      </main>
      <footer className="h-[3px] shrink-0 border-t border-[#263a66] bg-[#0a0c45]" />
    </div>
  );
}
